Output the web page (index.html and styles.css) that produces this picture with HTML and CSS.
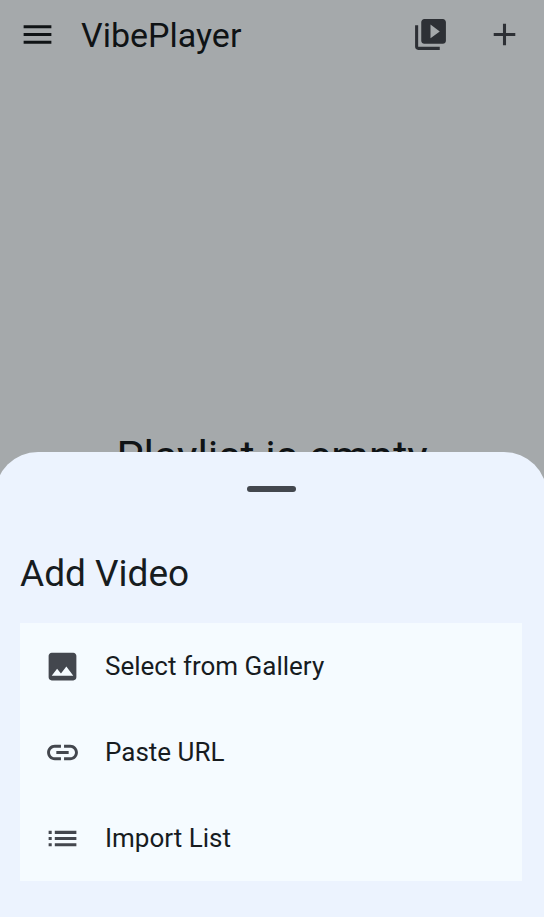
FILE: index.html
```html
<!DOCTYPE html>
<html lang="en">
<head>
<meta charset="utf-8">
<meta name="viewport" content="width=device-width, initial-scale=1">
<title>VibePlayer</title>
<link rel="stylesheet" href="styles.css">
</head>
<body>
<div class="app">
  <header class="app-bar">
    <button class="icon-button" type="button" aria-label="Menu">
      <svg class="icon" viewBox="0 0 24 24"><path d="M3 18h18v-2H3v2zm0-5h18v-2H3v2zm0-7v2h18V6H3z"/></svg>
    </button>
    <h1 class="app-title">VibePlayer</h1>
    <div class="app-actions">
      <button class="icon-button muted" type="button" aria-label="Video library">
        <svg class="icon" viewBox="0 0 24 24"><path d="M4 6H2v14c0 1.100.9 2 2 2h14v-2H4V6zm16-4H8c-1.100 0-2 .9-2 2v12c0 1.100.9 2 2 2h12c1.100 0 2-.9 2-2V4c0-1.100-.9-2-2-2zm-8 12.500v-9l6 4.500-6 4.500z"/></svg>
      </button>
      <button class="icon-button muted" type="button" aria-label="Add">
        <svg class="icon" viewBox="0 0 24 24"><path d="M19 13h-6v6h-2v-6H5v-2h6V5h2v6h6v2z"/></svg>
      </button>
    </div>
  </header>
  <main class="empty-state">
    <p class="empty-title">Playlist is empty</p>
  </main>
</div>
<div class="scrim"></div>
<section class="sheet" role="dialog" aria-labelledby="sheet-title">
  <div class="handle"></div>
  <h2 class="sheet-title" id="sheet-title">Add Video</h2>
  <div class="options">
    <button class="option" type="button">
      <svg class="icon" viewBox="0 0 24 24"><path d="M21 19V5c0-1.100-.9-2-2-2H5c-1.100 0-2 .9-2 2v14c0 1.100.9 2 2 2h14c1.100 0 2-.9 2-2zM8.500 13.500l2.500 3.010L14.500 12l4.500 6H5l3.500-4.500z"/></svg>
      <span>Select from Gallery</span>
    </button>
    <button class="option" type="button">
      <svg class="icon" viewBox="0 0 24 24"><path d="M3.900 12c0-1.710 1.390-3.100 3.100-3.100h4V7H7c-2.760 0-5 2.240-5 5s2.240 5 5 5h4v-1.900H7c-1.710 0-3.100-1.390-3.100-3.100zM8 13h8v-2H8v2zm9-6h-4v1.900h4c1.710 0 3.100 1.390 3.100 3.100s-1.390 3.100-3.100 3.100h-4V17h4c2.760 0 5-2.240 5-5s-2.240-5-5-5z"/></svg>
      <span>Paste URL</span>
    </button>
    <button class="option" type="button">
      <svg class="icon" viewBox="0 0 24 24"><path d="M3 13h2v-2H3v2zm0 4h2v-2H3v2zm0-8h2V7H3v2zm4 4h14v-2H7v2zm0 4h14v-2H7v2zM7 7v2h14V7H7z"/></svg>
      <span>Import List</span>
    </button>
  </div>
</section>
</body>
</html>
```

FILE: styles.css
```css
* {
  box-sizing: border-box;
}

body {
  margin: 0;
  overflow: hidden;
  background: #f4fafd;
  color: #171c1f;
  font-family: Roboto, sans-serif;
}

h1,
h2,
p {
  margin: 0;
  font-weight: 400;
}

button {
  border: 0;
  padding: 0;
  background: none;
  color: inherit;
  font: inherit;
}

.icon {
  display: block;
  flex: none;
  width: 37px;
  height: 37px;
  fill: currentColor;
}

.app {
  display: flex;
  flex-direction: column;
  min-height: 100vh;
}

.app-bar {
  display: flex;
  align-items: center;
  height: 69px;
  padding: 0 21px 0 19px;
}

.app-title {
  margin-left: 25px;
  font-size: 34px;
  line-height: 44px;
}

.app-actions {
  display: flex;
  gap: 37px;
  margin-left: auto;
}

.muted {
  color: #43474e;
}

.empty-state {
  display: flex;
  flex: 1;
  align-items: center;
  justify-content: center;
  padding-bottom: 74px;
}

.empty-title {
  font-size: 43px;
  line-height: 56px;
}

.scrim {
  position: fixed;
  inset: 0;
  background: rgba(0, 0, 0, 0.32);
}

/* The sheet runs slightly past the window edges, which trims its corners. */
.sheet {
  position: fixed;
  right: -3px;
  bottom: 0;
  left: -5px;
  padding: 34px 25px 36px;
  border-radius: 43px 43px 0 0;
  background: #ecf3fe;
}

.handle {
  width: 49px;
  height: 6px;
  margin: 0 auto 59px;
  border-radius: 3px;
  background: #43474e;
}

.sheet-title {
  margin-bottom: 26px;
  font-size: 37px;
  line-height: 46px;
}

.options {
  display: flex;
  flex-direction: column;
  background: #f5fbff;
}

.option {
  display: flex;
  align-items: center;
  gap: 24px;
  height: 86px;
  padding: 0 24px;
  font-size: 26px;
  line-height: 36px;
  text-align: left;
}

.option .icon {
  color: #43474e;
}
```
